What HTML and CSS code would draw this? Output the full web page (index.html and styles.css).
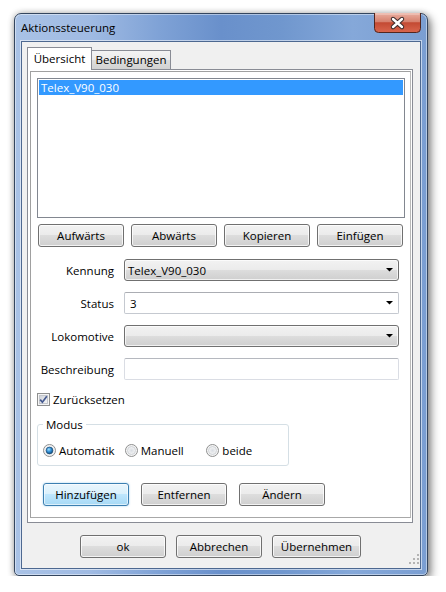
FILE: index.html
```html
<!DOCTYPE html>
<html lang="de">
<head>
<meta charset="utf-8">
<title>Aktionssteuerung</title>
<link rel="stylesheet" href="styles.css">
</head>
<body>
<div class="screen">
  <div class="window">
    <div class="titlebar">
      <span class="title">Aktionssteuerung</span>
      <div class="close">
        <svg width="47" height="20" viewBox="0 0 47 20">
          <defs>
            <linearGradient id="clg" x1="0" y1="0" x2="0" y2="1">
              <stop offset="0" stop-color="#eab0a2"/>
              <stop offset="0.45" stop-color="#d6806d"/>
              <stop offset="0.5" stop-color="#c34a33"/>
              <stop offset="1" stop-color="#d9664e"/>
            </linearGradient>
          </defs>
          <path d="M0.5 0 V15.5 Q0.5 19.5 4.5 19.5 H42.5 Q46.5 19.5 46.5 15.5 V0" fill="url(#clg)" stroke="#52261f"/>
          <path d="M1.5 1 H45.5" stroke="#f3cfc6" stroke-width="1"/>
          <path d="M19 6 L28 14 M28 6 L19 14" stroke="#3b2a2a" stroke-width="4.4" stroke-linecap="round"/>
          <path d="M19 6 L28 14 M28 6 L19 14" stroke="#ffffff" stroke-width="2.4" stroke-linecap="round"/>
        </svg>
      </div>
    </div>
    <div class="client">
      <div class="tabs">
        <div class="tabstrip">
          <div class="tab active">Übersicht</div>
          <div class="tab">Bedingungen</div>
        </div>
        <div class="tabpanel">
          <div class="page">
            <div class="list">
              <div class="item selected">Telex_V90_030</div>
            </div>
            <div class="btnrow">
              <div class="btn">Aufwärts</div>
              <div class="btn">Abwärts</div>
              <div class="btn">Kopieren</div>
              <div class="btn">Einfügen</div>
            </div>
            <div class="form">
              <div class="row">
                <span class="label">Kennung</span>
                <div class="combo">
                  <span class="value">Telex_V90_030</span>
                  <svg class="arrow" width="7" height="4" viewBox="0 0 7 4"><path d="M0 0H7L3.5 3.6Z" fill="#000"/></svg>
                </div>
              </div>
              <div class="row">
                <span class="label">Status</span>
                <div class="combo editable">
                  <span class="value">3</span>
                  <svg class="arrow" width="7" height="4" viewBox="0 0 7 4"><path d="M0 0H7L3.5 3.6Z" fill="#000"/></svg>
                </div>
              </div>
              <div class="row">
                <span class="label">Lokomotive</span>
                <div class="combo">
                  <span class="value"></span>
                  <svg class="arrow" width="7" height="4" viewBox="0 0 7 4"><path d="M0 0H7L3.5 3.6Z" fill="#000"/></svg>
                </div>
              </div>
              <div class="row">
                <span class="label">Beschreibung</span>
                <div class="textbox"></div>
              </div>
            </div>
            <div class="check">
              <svg width="13" height="13" viewBox="0 0 13 13">
                <defs>
                  <linearGradient id="cbg" x1="0" y1="0" x2="1" y2="1">
                    <stop offset="0" stop-color="#cdd1d8"/>
                    <stop offset="1" stop-color="#f7f7f7"/>
                  </linearGradient>
                </defs>
                <rect x="0.5" y="0.5" width="12" height="12" fill="#f5f5f5" stroke="#8e8f8f"/>
                <rect x="2.5" y="2.5" width="8" height="8" fill="url(#cbg)" stroke="#c3c6cc"/>
                <path d="M3.2 6.6 L5.4 9.2 L9.8 3.2" fill="none" stroke="#44598f" stroke-width="1.7"/>
              </svg>
              <span class="checklabel">Zurücksetzen</span>
            </div>
            <fieldset class="group">
              <legend>Modus</legend>
              <div class="radios">
                <div class="radio">
                  <svg width="13" height="13" viewBox="0 0 13 13">
                    <defs>
                      <radialGradient id="rbg" cx="0.5" cy="0.5" r="0.5">
                        <stop offset="0" stop-color="#d9dde3"/>
                        <stop offset="1" stop-color="#f5f5f5"/>
                      </radialGradient>
                      <radialGradient id="rdot" cx="0.4" cy="0.35" r="0.65">
                        <stop offset="0" stop-color="#9fe0ff"/>
                        <stop offset="0.55" stop-color="#2d8bd3"/>
                        <stop offset="1" stop-color="#14507f"/>
                      </radialGradient>
                    </defs>
                    <circle cx="6.5" cy="6.5" r="6" fill="url(#rbg)" stroke="#8e8f8f"/>
                    <circle cx="6.5" cy="6.5" r="3.4" fill="url(#rdot)" stroke="#1d4b73" stroke-width="0.7"/>
                  </svg>
                  <span>Automatik</span>
                </div>
                <div class="radio">
                  <svg width="13" height="13" viewBox="0 0 13 13">
                    <circle cx="6.5" cy="6.5" r="6" fill="#f4f4f4" stroke="#8e8f8f"/>
                    <circle cx="6.5" cy="6.5" r="4" fill="url(#rbg)" stroke="#c7cacf" stroke-width="0.8"/>
                  </svg>
                  <span>Manuell</span>
                </div>
                <div class="radio">
                  <svg width="13" height="13" viewBox="0 0 13 13">
                    <circle cx="6.5" cy="6.5" r="6" fill="#f4f4f4" stroke="#8e8f8f"/>
                    <circle cx="6.5" cy="6.5" r="4" fill="url(#rbg)" stroke="#c7cacf" stroke-width="0.8"/>
                  </svg>
                  <span>beide</span>
                </div>
              </div>
            </fieldset>
            <div class="actions">
              <div class="btn default">Hinzufügen</div>
              <div class="btn">Entfernen</div>
              <div class="btn">Ändern</div>
            </div>
          </div>
        </div>
      </div>
      <div class="footer">
        <div class="btn">ok</div>
        <div class="btn">Abbrechen</div>
        <div class="btn wide">Übernehmen</div>
      </div>
      <svg class="grip" width="10" height="10" viewBox="0 0 10 10">
        <g fill="#b4b4b4">
          <rect x="8" y="0" width="2" height="2"/>
          <rect x="4" y="4" width="2" height="2"/>
          <rect x="8" y="4" width="2" height="2"/>
          <rect x="0" y="8" width="2" height="2"/>
          <rect x="4" y="8" width="2" height="2"/>
          <rect x="8" y="8" width="2" height="2"/>
        </g>
      </svg>
    </div>
  </div>
</div>
</body>
</html>
```

FILE: styles.css
```css
html, body {
  margin: 0;
  padding: 0;
  background: #ffffff;
}

body {
  font-family: "Open Sans", "Noto Sans", sans-serif;
  font-size: 11.5px;
  line-height: 15px;
  color: #000000;
}

.screen {
  padding: 13px 0 0 14px;
}

.window {
  width: 414px;
  height: 563px;
  box-sizing: border-box;
  border: 1px solid #34465f;
  border-radius: 7px 7px 5px 5px;
  background: linear-gradient(to right, #a9c2e6 0%, #a0bbe3 18%, #7fa2d6 35%, #6990cb 50%, #7097ce 65%, #85a8d9 82%, #7a9ed2 100%);
  box-shadow: inset 0 0 0 1px rgba(255, 255, 255, 0.45), 3px 4px 10px rgba(0, 0, 0, 0.45), 0 0 6px rgba(0, 0, 0, 0.25);
  padding: 0 6px 6px 6px;
  display: flex;
  flex-direction: column;
}

.titlebar {
  height: 27px;
  display: flex;
  align-items: flex-start;
  flex: none;
}

.title {
  margin-top: 6px;
  font-size: 11.5px;
  color: #000000;
}

.close {
  margin-left: auto;
  margin-top: -1px;
  width: 47px;
  height: 20px;
}

.close svg {
  display: block;
}

.client {
  flex: 1;
  position: relative;
  background: #f0f0f0;
  border: 1px solid #4d6890;
  box-shadow: 0 0 0 1px rgba(255, 255, 255, 0.55);
  display: flex;
  flex-direction: column;
}

.tabs {
  margin: 5px 7px 0 5px;
}

.tabstrip {
  height: 22px;
  display: flex;
  align-items: flex-end;
}

.tab {
  box-sizing: border-box;
  height: 19px;
  border: 1px solid #898c95;
  border-bottom: none;
  text-align: center;
  padding-top: 1px;
  background: linear-gradient(#f3f3f3 0%, #ebebeb 50%, #dddddd 50%, #d2d2d2 100%);
}

.tab.active {
  position: relative;
  z-index: 1;
  width: 65px;
  height: 23px;
  margin-bottom: -1px;
  padding-top: 3px;
  background: #ffffff;
}

.tab:not(.active) {
  width: 80px;
  margin-left: -1px;
}

.tabpanel {
  box-sizing: border-box;
  height: 454px;
  border: 1px solid #898c95;
  background: #ffffff;
  padding: 1px 1px 4px 2px;
}

.page {
  box-sizing: border-box;
  height: 447px;
  border: 1px solid #a0a0a0;
  border-right-color: #b9b9b9;
  border-bottom-color: #a8a8a8;
  display: flex;
  flex-direction: column;
}

.list {
  box-sizing: border-box;
  margin: 6px 0 0 6px;
  width: 368px;
  height: 140px;
  border: 1px solid #828790;
  padding: 1px;
  background: #ffffff;
}

.item {
  height: 15px;
  line-height: 15px;
  padding-left: 2px;
}

.item.selected {
  background: #3399ff;
  color: #ffffff;
}

.btnrow {
  display: flex;
  gap: 7px;
  margin: 6px 0 0 7px;
}

.btn {
  box-sizing: border-box;
  width: 86px;
  height: 23px;
  border: 1px solid #707070;
  border-radius: 3px;
  background: linear-gradient(#f2f2f2 0%, #ebebeb 50%, #dddddd 50%, #cfcfcf 100%);
  box-shadow: inset 0 0 0 1px rgba(255, 255, 255, 0.75);
  display: flex;
  align-items: center;
  justify-content: center;
  color: #000000;
}

.btn.default {
  border-color: #3c7fb1;
  background: linear-gradient(#eaf6fd 0%, #d9f0fc 50%, #bee6fd 50%, #a7d9f5 100%);
  box-shadow: inset 0 0 0 1px rgba(255, 255, 255, 0.6), 0 0 2px rgba(80, 170, 230, 0.6);
}

.btn.wide {
  width: 89px;
}

.form {
  display: flex;
  flex-direction: column;
  gap: 11px;
  margin-top: 12px;
}

.row {
  display: flex;
  align-items: center;
  height: 22px;
}

.label {
  width: 83px;
  text-align: right;
  margin-right: 10px;
}

.combo {
  box-sizing: border-box;
  width: 275px;
  height: 22px;
  border: 1px solid #707070;
  border-radius: 3px;
  background: linear-gradient(#f2f2f2 0%, #ebebeb 50%, #dddddd 50%, #cfcfcf 100%);
  box-shadow: inset 0 0 0 1px rgba(255, 255, 255, 0.7);
  display: flex;
  align-items: center;
  justify-content: space-between;
  padding: 0 5px 0 3px;
}

.combo.editable {
  background: #ffffff;
  border-color: #c5c9d0;
  border-top-color: #abadb3;
  border-radius: 2px;
  box-shadow: none;
  padding-left: 5px;
}

.arrow {
  display: block;
  flex: none;
}

.textbox {
  box-sizing: border-box;
  width: 275px;
  height: 22px;
  background: #ffffff;
  border: 1px solid #dadde4;
  border-top-color: #b5b8bf;
  border-radius: 2px;
}

.check {
  display: flex;
  align-items: center;
  height: 13px;
  margin: 13px 0 0 6px;
}

.check svg {
  display: block;
  flex: none;
}

.checklabel {
  margin-left: 3px;
}

.group {
  box-sizing: border-box;
  width: 252px;
  margin: 11px 0 0 6px;
  padding: 12px 0 8px 5px;
  border: 1px solid #d5dfe5;
  border-radius: 3px;
  min-width: 0;
}

.group legend {
  padding: 0 3px;
  line-height: 15px;
}

.radios {
  display: flex;
  height: 13px;
}

.radio {
  width: 82px;
  display: flex;
  align-items: center;
}

.radio svg {
  display: block;
  flex: none;
  margin-right: 3px;
}

.actions {
  display: flex;
  gap: 12px;
  margin: 17px 0 0 12px;
}

.footer {
  display: flex;
  gap: 10px;
  margin-top: 12px;
  padding-left: 58px;
}

.grip {
  position: absolute;
  right: 1px;
  bottom: 4px;
  display: block;
}
```
